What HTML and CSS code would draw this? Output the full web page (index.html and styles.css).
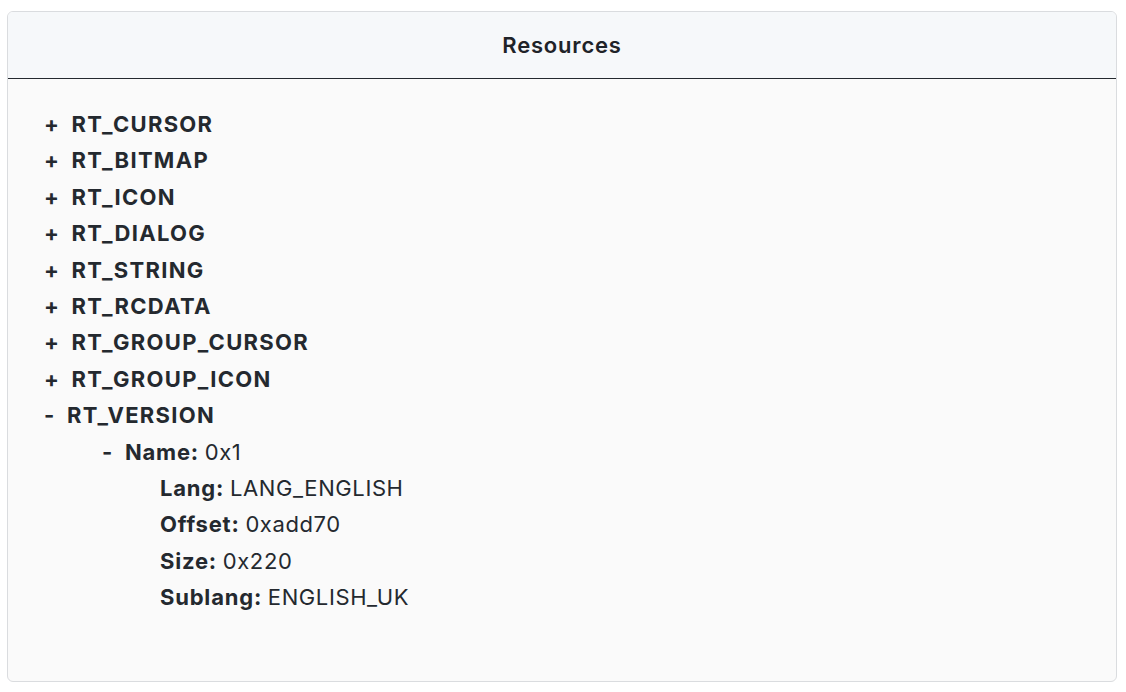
FILE: index.html
```html
<!DOCTYPE html>
<html>
<head>
<meta charset="utf-8">
<link rel="stylesheet" href="styles.css">
</head>
<body>
<div class="card">
  <div class="card-header">Resources</div>
  <div class="card-body">
    <ul class="tree">
      <li><span class="mk">+</span><span class="key">RT_CURSOR</span></li>
      <li><span class="mk">+</span><span class="key">RT_BITMAP</span></li>
      <li><span class="mk">+</span><span class="key">RT_ICON</span></li>
      <li><span class="mk">+</span><span class="key">RT_DIALOG</span></li>
      <li><span class="mk">+</span><span class="key">RT_STRING</span></li>
      <li><span class="mk">+</span><span class="key">RT_RCDATA</span></li>
      <li><span class="mk">+</span><span class="key">RT_GROUP_CURSOR</span></li>
      <li><span class="mk">+</span><span class="key">RT_GROUP_ICON</span></li>
      <li><span class="mk">-</span><span class="key">RT_VERSION</span>
        <ul class="tree sub">
          <li><span class="mk">-</span><span class="key small">Name:</span> 0x1
            <ul class="tree sub">
              <li><span class="key small">Lang:</span> LANG_ENGLISH</li>
              <li><span class="key small">Offset:</span> 0xadd70</li>
              <li><span class="key small">Size:</span> 0x220</li>
              <li><span class="key small">Sublang:</span> ENGLISH_UK</li>
            </ul>
          </li>
        </ul>
      </li>
    </ul>
  </div>
</div>
</body>
</html>
```
FILE: styles.css
```css
html, body { margin: 0; padding: 0; background: #ffffff; }
body {
  padding: 11px 9px 10px 7px;
  font-family: Inter, "Noto Sans", sans-serif;
  color: #24292f;
}
.card {
  width: 1110px;
  height: 671px;
  box-sizing: border-box;
  border: 1px solid #dadcdf;
  border-radius: 6px;
  background: #fafafa;
  overflow: hidden;
}
.card-header {
  height: 67px;
  box-sizing: border-box;
  background: #f6f8fa;
  border-bottom: 1px solid #24292f;
  display: flex;
  align-items: center;
  justify-content: center;
  font-size: 22px;
  font-weight: 600;
  letter-spacing: 0.8px;
  color: #1f2328;
}
.card-body {
  padding: 27px 36px;
}
.tree {
  list-style: none;
  margin: 0;
  padding: 0;
  font-size: 22px;
  line-height: 36.4px;
  letter-spacing: 0.6px;
  word-spacing: -1px;
}
.tree.sub { padding-left: 58px; }
.mk {
  font-weight: 700;
  display: inline-block;
  margin-right: 12px;
}
.key { font-weight: 700; letter-spacing: 1.3px; }
.key.small { letter-spacing: 0.8px; }
```
